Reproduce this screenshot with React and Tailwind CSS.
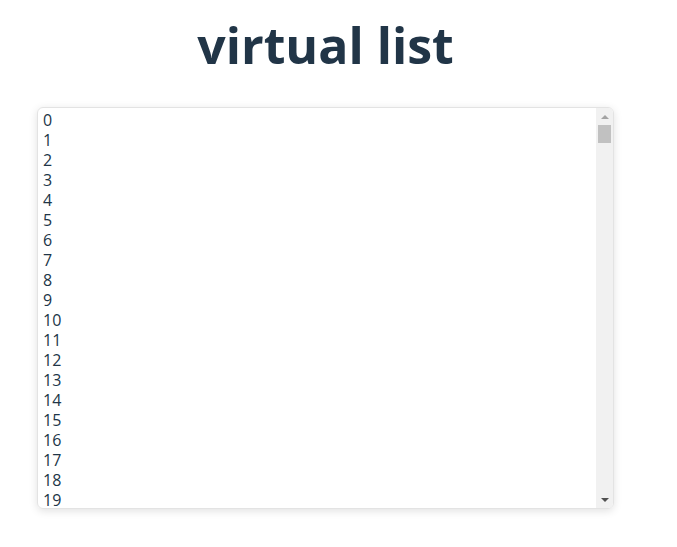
const items = Array.from({ length: 20 }, (_, i) => i);

const App = () => {
  return (
    <div
      className="min-h-screen bg-white text-[#213547]"
      style={{ fontFamily: '"Open Sans", "Noto Sans", sans-serif' }}
    >
      <div className="ml-[37px] w-[577px] pt-[9px]">
        <h1 className="text-center text-[50px] font-bold leading-[72px] text-[#213547]">
          virtual list
        </h1>

        <div className="mt-[26px] flex h-[402px] overflow-hidden rounded-md border border-[#e3e3e3] shadow-[0_2px_8px_rgba(0,0,0,0.12)]">
          <div className="flex-1 overflow-hidden pl-[5px] pt-[2px]">
            {items.map((item) => (
              <div key={item} className="h-5 text-[16px] leading-5">
                {item}
              </div>
            ))}
          </div>

          <div className="flex w-[17px] flex-col items-center bg-[#f1f1f1]">
            <div className="flex h-[17px] w-full items-center justify-center">
              <div className="h-0 w-0 border-x-[4px] border-b-[4px] border-x-transparent border-b-[#a3a3a3]" />
            </div>
            <div className="h-[18px] w-[13px] bg-[#c1c1c1]" />
            <div className="flex-1" />
            <div className="flex h-[17px] w-full items-center justify-center">
              <div className="h-0 w-0 border-x-[4px] border-t-[4px] border-x-transparent border-t-[#505050]" />
            </div>
          </div>
        </div>
      </div>
    </div>
  );
};

export default App;
